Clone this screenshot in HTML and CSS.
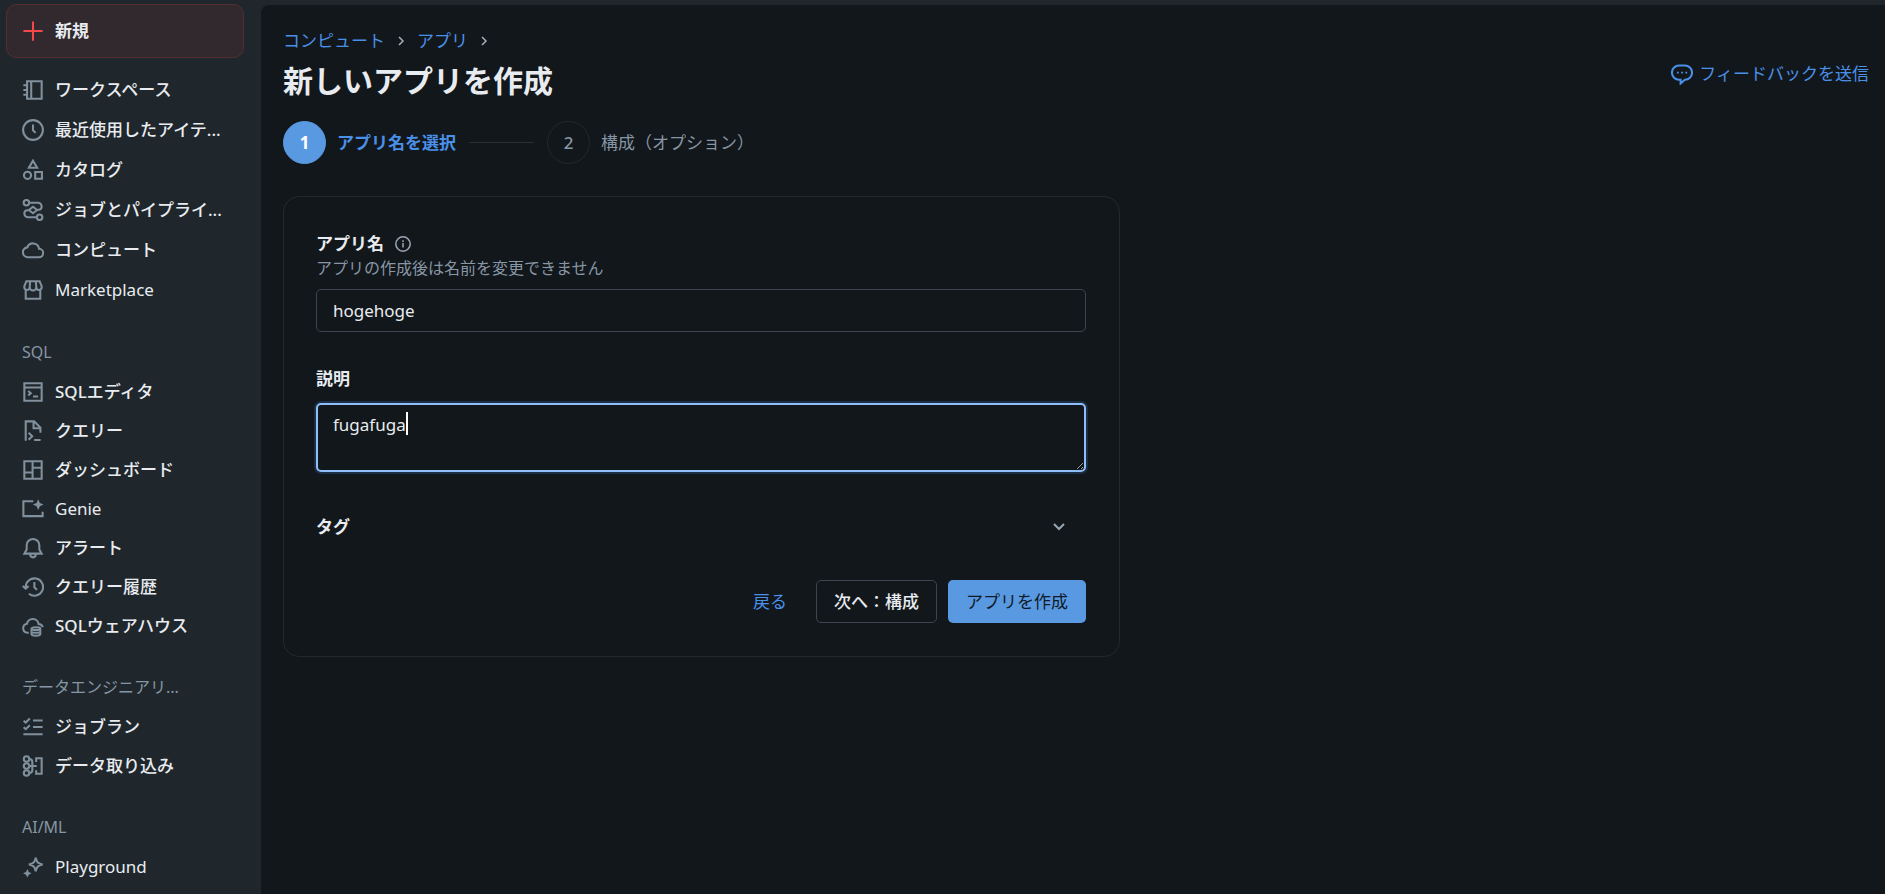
FILE: index.html
```html
<!DOCTYPE html>
<html lang="ja">
<head>
<meta charset="utf-8">
<meta name="viewport" content="width=device-width, initial-scale=1">
<title>新しいアプリを作成</title>
<link rel="stylesheet" href="styles.css">
</head>
<body>
<div class="app">
  <aside class="sidebar">
    <button type="button" class="new-button">
      <svg class="icon" viewBox="0 0 16 16"><path d="M8 1v14M1 8h14"/></svg>
      <span>新規</span>
    </button>
    <nav class="nav" aria-label="メインナビゲーション">
      <ul class="nav-list nav-primary">
        <li><a class="nav-item" href="#"><svg class="icon" viewBox="0 0 16 16"><path d="M3.7 1.7h10.6v12.6H3.7zM6.7 1.7v12.6M1 4.6h2.7M1 8h2.7M1 11.4h2.7"/></svg><span>ワークスペース</span></a></li>
        <li><a class="nav-item" href="#"><svg class="icon" viewBox="0 0 16 16"><circle cx="8" cy="8" r="7.2"/><path d="M8 4v4.2l1.9 1.9"/></svg><span>最近使用したアイテ...</span></a></li>
        <li><a class="nav-item" href="#"><svg class="icon" viewBox="0 0 16 16"><path d="M8 1.2l3 5.1H5zM9.6 9.4h4.9v4.9H9.6z"/><circle cx="4" cy="11.9" r="2.6"/></svg><span>カタログ</span></a></li>
        <li><a class="nav-item" href="#"><svg class="icon" viewBox="0 0 16 16"><circle cx="3.2" cy="2.7" r="2"/><circle cx="12.8" cy="13.3" r="2"/><path d="M5.2 2.7h6.400a2.700 2.700 0 0 1 1.400 5L11 8M10.800 13.300H4.400a2.700 2.700 0 0 1-1.400-5L5 8M5 8l3-2.400L11 8l-3 2.400z"/></svg><span>ジョブとパイプライ...</span></a></li>
        <li><a class="nav-item" href="#"><svg class="icon" viewBox="0 0 16 16"><path d="M3.900 13.300h8.300a3.100 3.100 0 0 0 .2-6.200A4.400 4.400 0 0 0 3.900 6.100a3.620 3.620 0 0 0 0 7.200z"/></svg><span>コンピュート</span></a></li>
        <li><a class="nav-item nav-item-latin" href="#"><svg class="icon" viewBox="0 0 16 16"><path d="M2.700 8v6.300h10.600V8M3.200 1.700h9.600l1.500 3.500v.8a1.900 1.900 0 0 1-3.900 0 2.100 2.100 0 0 1-4.800 0 1.900 1.900 0 0 1-3.900 0v-.8zM5.900 1.700L5.600 6M10.100 1.700l.3 4.300"/></svg><span>Marketplace</span></a></li>
      </ul>
      <section class="nav-section">
        <h2 class="nav-heading">SQL</h2>
        <ul class="nav-list">
          <li><a class="nav-item" href="#"><svg class="icon" viewBox="0 0 16 16"><path d="M1.700 1.700h12.600v12.600H1.700zM1.700 4.700h12.600M4.500 7.200l1.900 1.700-1.900 1.700M8 11.300h3.700"/></svg><span>SQLエディタ</span></a></li>
          <li><a class="nav-item" href="#"><svg class="icon" viewBox="0 0 16 16"><path d="M2.700 15V1h6.100l4.600 4.600v3.700M8.400 1v5h5M4.800 9.300l2.600 2.500-2.600 2.500M8.800 14.600h4.700"/></svg><span>クエリー</span></a></li>
          <li><a class="nav-item" href="#"><svg class="icon" viewBox="0 0 16 16"><path d="M1.700 1.700h12.600v12.600H1.700zM7.700 1.700v12.600M1.700 9.800h6M7.700 6.300h6.600"/></svg><span>ダッシュボード</span></a></li>
          <li><a class="nav-item nav-item-latin" href="#"><svg class="icon" viewBox="0 0 16 16"><path d="M8.200 2.400H1v10.800h14V10"/><path class="solid" d="M11.800.9l1.200 2.700 2.700 1.200L13 6l-1.200 2.700L10.600 6 7.900 4.800l2.700-1.200z"/></svg><span>Genie</span></a></li>
          <li><a class="nav-item" href="#"><svg class="icon" viewBox="0 0 16 16"><path d="M3.400 6a4.600 4.600 0 0 1 9.200 0v3l1.700 3.100H1.700L3.400 9zM6 12.100v.7a2 2 0 0 0 4 0v-.7"/></svg><span>アラート</span></a></li>
          <li><a class="nav-item" href="#"><svg class="icon" viewBox="0 0 16 16"><path d="M2.700 8A6.300 6.300 0 1 1 5 12.900M.5 7.200l2.200 2 2.100-2M9 4.300v3.900l1.900 1.900"/></svg><span>クエリー履歴</span></a></li>
          <li><a class="nav-item" href="#"><svg class="icon" viewBox="0 0 16 16"><path d="M4.900 12.900H3.600a3.300 3.300 0 0 1 0-6.500 4.300 4.300 0 0 1 8.500.2c1.600.1 2.600.9 3 2.200M6.900 10c0-1.500 6.400-1.500 6.400 0v3.900c0 1.500-6.400 1.500-6.400 0zM6.900 10c0 1.300 6.400 1.300 6.400 0M6.900 12c0 1.300 6.400 1.300 6.400 0"/></svg><span>SQLウェアハウス</span></a></li>
        </ul>
      </section>
      <section class="nav-section">
        <h2 class="nav-heading">データエンジニアリ...</h2>
        <ul class="nav-list">
          <li><a class="nav-item" href="#"><svg class="icon" viewBox="0 0 16 16"><path d="M8 3.300h7M8 8h7M1 13.300h14M1.200 3.400l1.500 1.400L5.700 1.900M1.200 8.200l1.500 1.400 3-2.900"/></svg><span>ジョブラン</span></a></li>
          <li><a class="nav-item" href="#"><svg class="icon" viewBox="0 0 16 16"><circle cx="3.300" cy="2.900" r="2"/><circle cx="3.300" cy="8" r="2"/><circle cx="3.300" cy="13.100" r="2"/><path d="M5.300 2.900c1.600 0 2.200.7 2.200 2.200v5.800c0 1.500-.6 2.200-2.200 2.200M5.300 8h5.400M10.300 5V2.300h4v11.400h-4V11"/></svg><span>データ取り込み</span></a></li>
        </ul>
      </section>
      <section class="nav-section">
        <h2 class="nav-heading">AI/ML</h2>
        <ul class="nav-list">
          <li><a class="nav-item nav-item-latin" href="#"><svg class="icon" viewBox="0 0 16 16"><path d="M10 1.300c.6 3.200 1.700 4.200 5 4.900-3.300.6-4.400 1.700-5 4.900-.6-3.200-1.700-4.300-5-4.900 3.300-.7 4.400-1.700 5-4.900z"/><path class="solid" d="M3.900 9.500l1 2.100 2.100 1-2.100 1-1 2.100-1-2.100-2.100-1 2.100-1z"/></svg><span>Playground</span></a></li>
        </ul>
      </section>
    </nav>
  </aside>

  <main class="main">
    <header class="page-header">
      <div class="page-heading">
        <nav class="breadcrumb" aria-label="パンくずリスト">
          <a href="#">コンピュート</a>
          <svg class="crumb-arrow" viewBox="0 0 8 10"><path d="M2 1l4 4-4 4"/></svg>
          <a href="#">アプリ</a>
          <svg class="crumb-arrow" viewBox="0 0 8 10"><path d="M2 1l4 4-4 4"/></svg>
        </nav>
        <h1 class="page-title">新しいアプリを作成</h1>
      </div>
      <a class="feedback" href="#">
        <svg class="icon" viewBox="0 0 16 16"><path d="M6.300 12.200H5.900A5.200 5.200 0 0 1 5.900 1.800h4.200a5.200 5.200 0 0 1 0 10.400L7 14.900v-2.700z"/><path class="solid" d="M4.300 6.400h1.300v1.300H4.300zM7.400 6.400h1.300v1.300H7.400zM10.500 6.400h1.300v1.300h-1.300z"/></svg>
        <span>フィードバックを送信</span>
      </a>
    </header>

    <ol class="steps">
      <li class="step step-active" aria-current="step"><span class="step-number">1</span><span>アプリ名を選択</span></li>
      <li class="step-line" aria-hidden="true"></li>
      <li class="step"><span class="step-number">2</span><span>構成（オプション）</span></li>
    </ol>

    <form class="card">
      <div class="field">
        <div class="label-row">
          <label class="label" for="app-name">アプリ名</label>
          <svg class="info-icon" viewBox="0 0 16 16"><circle cx="8" cy="8" r="7.200"/><path d="M8 7v4.500M8 4.300v1.600"/></svg>
        </div>
        <p class="hint" id="name-hint">アプリの作成後は名前を変更できません</p>
        <input class="input" id="app-name" type="text" value="hogehoge" aria-describedby="name-hint">
      </div>
      <div class="field">
        <label class="label label-spaced" for="description">説明</label>
        <div class="textarea-wrap">
          <textarea class="textarea" id="description" rows="2">fugafuga</textarea>
          <span class="caret"></span>
        </div>
      </div>
      <button type="button" class="tags-toggle" aria-expanded="false">
        <span>タグ</span>
        <svg class="chevron" viewBox="0 0 12 8"><path d="M1 1l5 5 5-5"/></svg>
      </button>
      <div class="actions">
        <button type="button" class="button button-link">戻る</button>
        <button type="button" class="button button-outline">次へ：構成</button>
        <button type="submit" class="button button-primary">アプリを作成</button>
      </div>
    </form>
  </main>
</div>
</body>
</html>
```
FILE: styles.css
```css
:root {
  --chrome: #20272c;
  --surface: #12171b;
  --text: #e8ecf0;
  --muted: #8796a5;
  --link: #4a90e8;
  --primary: #5999e2;
  --line: #22292d;
  --control: #3b4552;
  --focus: #8ebffa;
}

* {
  box-sizing: border-box;
}

body {
  margin: 0;
  background: var(--chrome);
  color: var(--text);
  font-family: "Noto Sans", "Noto Sans CJK JP", sans-serif;
  font-size: 17px;
  line-height: 24px;
}

button,
input,
textarea {
  font: inherit;
  color: inherit;
}

button {
  cursor: pointer;
}

a {
  color: var(--link);
  text-decoration: none;
}

svg {
  display: block;
  flex: none;
  fill: none;
  stroke: currentColor;
  stroke-width: 1.5;
}

.solid {
  fill: currentColor;
  stroke: none;
}

.icon {
  width: 22px;
  height: 22px;
}

.app {
  display: flex;
  height: 100vh;
  overflow: hidden;
}

/* Sidebar */

.sidebar {
  flex: none;
  width: 261px;
  padding: 4px 17px 0 6px;
  overflow: hidden;
}

.new-button {
  display: flex;
  align-items: center;
  gap: 11px;
  width: 100%;
  height: 54px;
  padding: 0 15px;
  border: 1px solid #532d32;
  border-radius: 10px;
  background: #32292e;
  font-weight: 700;
}

.new-button .icon {
  color: #f5484a;
}

.nav {
  padding-top: 12px;
}

.nav-list {
  margin: 0;
  padding: 0;
  list-style: none;
}

.nav-item {
  display: flex;
  align-items: center;
  gap: 11px;
  height: 39px;
  padding-left: 16px;
  color: var(--text);
  font-weight: 500;
  white-space: nowrap;
}

.nav-item-latin {
  font-weight: 400;
}

.nav-item .icon {
  color: #80909c;
}

.nav-primary {
  margin-bottom: 23px;
}

.nav-primary .nav-item {
  height: 40px;
}

.nav-section {
  margin-bottom: 23px;
}

.nav-heading {
  margin: 0;
  padding-left: 16px;
  color: var(--muted);
  font-size: 16px;
  font-weight: 400;
  line-height: 39px;
  white-space: nowrap;
}

/* Main area */

.main {
  flex: 1;
  min-width: 0;
  margin-top: 5px;
  padding: 24px 16px 0 22px;
  border-top-left-radius: 8px;
  background: var(--surface);
}

.page-header {
  display: flex;
  align-items: flex-end;
  justify-content: space-between;
  margin-bottom: 20px;
}

.breadcrumb {
  display: flex;
  align-items: center;
  gap: 12px;
}

.crumb-arrow {
  width: 8px;
  height: 10px;
  color: #a5afb9;
}

.page-title {
  margin: 8px 0 0;
  font-size: 30px;
  line-height: 40px;
}

.feedback {
  display: flex;
  align-items: center;
  gap: 6px;
  padding-bottom: 15px;
}

.steps {
  display: flex;
  align-items: center;
  gap: 13px;
  margin: 0 0 32px;
  padding: 0;
  list-style: none;
}

.step {
  display: flex;
  align-items: center;
  gap: 11px;
  color: var(--muted);
}

.step-number {
  display: grid;
  place-items: center;
  width: 43px;
  height: 43px;
  border: 1px solid var(--line);
  border-radius: 50%;
  font-weight: 500;
}

.step-active {
  color: var(--link);
  font-weight: 700;
}

.step-active .step-number {
  border-color: var(--primary);
  background: var(--primary);
  color: #ffffff;
  font-weight: 700;
}

.step-line {
  width: 65px;
  height: 1px;
  background: #2a3135;
}

/* Form */

.card {
  max-width: 837px;
  padding: 35px 33px 33px 32px;
  border: 1px solid var(--line);
  border-radius: 16px;
}

.field {
  margin-bottom: 35px;
}

.label-row {
  display: flex;
  align-items: center;
  gap: 11px;
}

.label {
  display: block;
  font-weight: 700;
}

.label-spaced {
  margin-bottom: 12px;
}

.info-icon {
  width: 16px;
  height: 16px;
  color: #9aa8b6;
}

.hint {
  margin: 0 0 9px;
  color: var(--muted);
  font-size: 16px;
}

.input,
.textarea {
  display: block;
  width: 100%;
  border: 1px solid var(--control);
  border-radius: 5px;
  outline: none;
  background: transparent;
}

.input {
  height: 43px;
  padding: 0 16px;
}

.textarea-wrap {
  position: relative;
}

.textarea {
  height: 69px;
  padding: 8px 15px;
  border: 2px solid var(--focus);
  box-shadow: 0 0 0 2px #1c2f45;
  resize: vertical;
}

.caret {
  position: absolute;
  top: 9px;
  left: 90px;
  width: 2px;
  height: 23px;
  background: #ffffff;
}

.tags-toggle {
  display: flex;
  align-items: center;
  justify-content: space-between;
  width: 100%;
  height: 40px;
  margin-bottom: 33px;
  padding: 0 21px 0 0;
  border: 0;
  background: transparent;
  font-weight: 700;
}

.chevron {
  width: 12px;
  height: 8px;
  color: #98a5b2;
  stroke-width: 2;
}

.actions {
  display: flex;
  justify-content: flex-end;
  gap: 11px;
}

.button {
  height: 43px;
  padding: 0 17px;
  border: 1px solid transparent;
  border-radius: 5px;
  background: transparent;
}

.button-link {
  color: var(--link);
}

.button-outline {
  border-color: var(--control);
  font-weight: 500;
}

.button-primary {
  background: var(--primary);
  color: #101a26;
}
```
